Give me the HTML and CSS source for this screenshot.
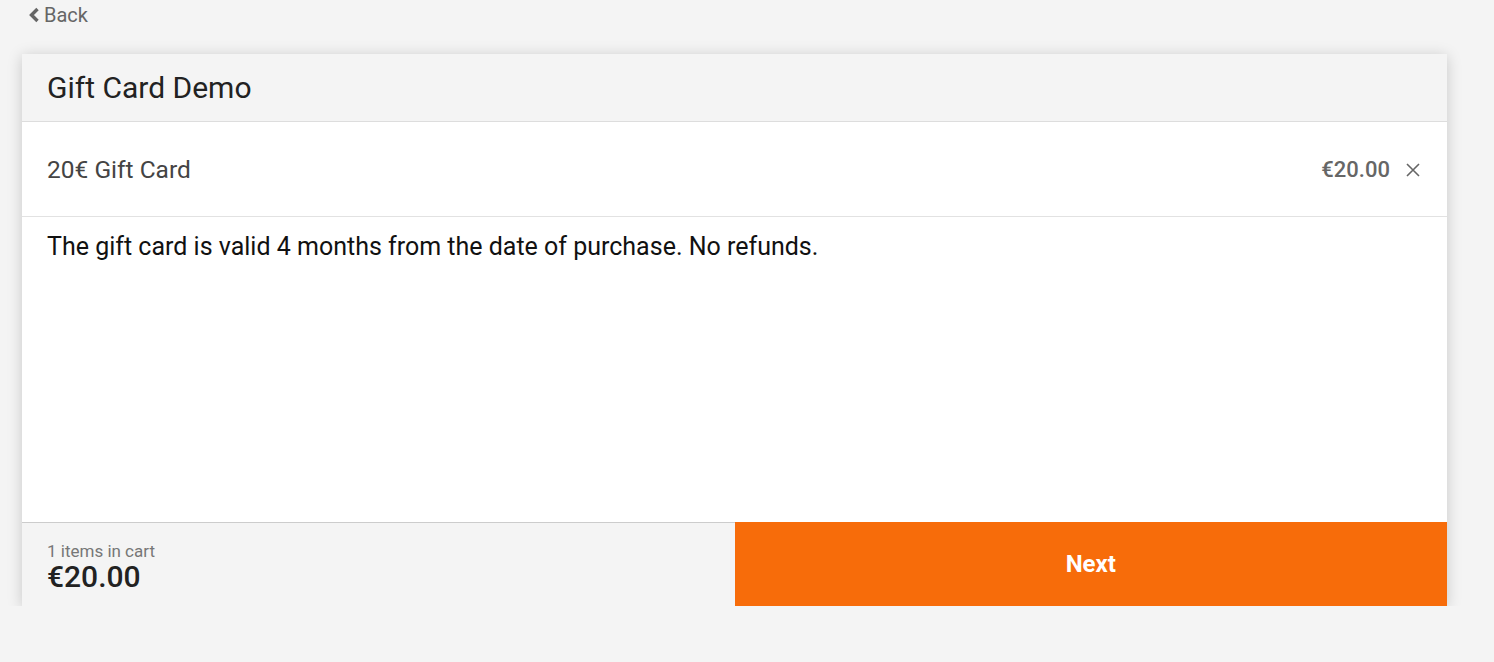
FILE: index.html
```html
<!DOCTYPE html>
<html>
<head>
<meta charset="utf-8">
<link rel="stylesheet" href="styles.css">
</head>
<body>
<a class="back" href="#"><svg class="chev" width="12" height="16" viewBox="0 0 12 16"><path d="M9.5 2 L3.5 8 L9.5 14" fill="none" stroke="#666" stroke-width="3.4"/></svg>Back</a>
<div class="card">
  <div class="card-header">Gift Card Demo</div>
  <div class="item-row">
    <span class="item-name">20€ Gift Card</span>
    <span class="item-right"><span class="item-price">€20.00</span><svg class="remove" width="16" height="16" viewBox="0 0 16 16"><path d="M2 2 L14 14 M14 2 L2 14" stroke="#666" stroke-width="1.6" fill="none"/></svg></span>
  </div>
  <div class="desc">The gift card is valid 4 months from the date of purchase. No refunds.</div>
  <div class="footer">
    <div class="summary">
      <div class="count">1 items in cart</div>
      <div class="total">€20.00</div>
    </div>
    <button class="next">Next</button>
  </div>
</div>
</body>
</html>
```
FILE: styles.css
```css
html, body { margin: 0; padding: 0; }
body {
  background: #f4f4f4;
  font-family: Roboto, "Liberation Sans", sans-serif;
  color: #222;
}
.back {
  display: flex;
  align-items: center;
  gap: 4px;
  margin-left: 28px;
  height: 30px;
  color: #666;
  font-size: 20px;
  text-decoration: none;
  width: max-content;
}
.chev { display: block; }
.card {
  margin: 24px 47px 0 22px;
  background: #fff;
  box-shadow: 0 2px 14px rgba(0,0,0,0.18);
  display: flex;
  flex-direction: column;
}
.card-header {
  background: #f4f4f4;
  height: 67px;
  border-bottom: 1px solid #ddd;
  display: flex;
  align-items: center;
  padding: 0 25px;
  font-size: 30px;
  color: #222;
}
.item-row {
  height: 94px;
  border-bottom: 1px solid #e2e2e2;
  display: flex;
  align-items: center;
  justify-content: space-between;
  padding: 0 26px 0 25px;
  font-size: 22px;
}
.item-name { color: #444; font-size: 24.5px; margin-top: 1px; }
.item-right { display: flex; align-items: center; gap: 15px; }
.item-price { color: #666; font-weight: 500; }
.remove { display: block; margin-top: 2px; }
.desc {
  height: 305px;
  box-sizing: border-box;
  padding: 15px 25px 0;
  font-size: 25px;
  color: #111;
}
.footer {
  display: grid;
  grid-template-columns: 1fr 1fr;
  height: 84px;
}
.summary {
  background: #f4f4f4;
  border-top: 1px solid #ccc;
  padding: 18px 25px 0;
  box-sizing: border-box;
}
.count { font-size: 17px; color: #777; line-height: 20px; }
.total { font-size: 30px; font-weight: 500; color: #222; line-height: 32px; }
.next {
  border: none;
  background: #f76c0a;
  color: #fff;
  font-family: Roboto, "Liberation Sans", sans-serif;
  font-size: 24px;
  font-weight: 700;
  padding: 0;
}
```
